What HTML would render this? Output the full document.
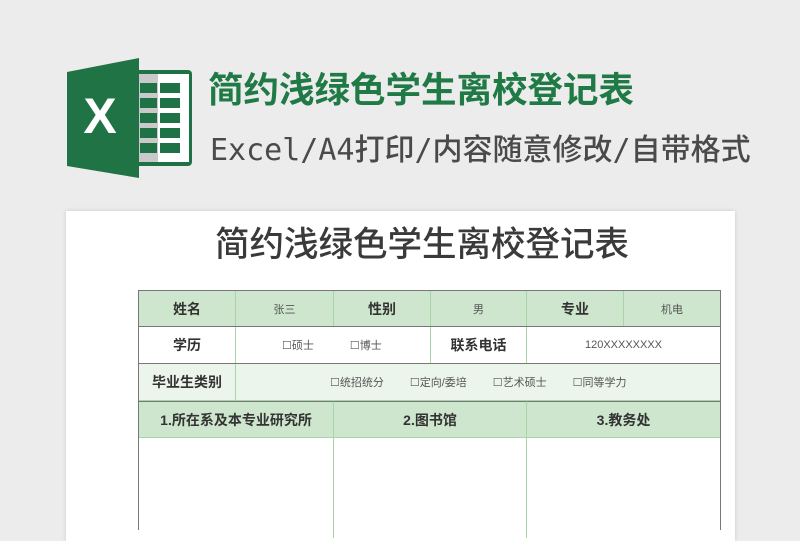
<!DOCTYPE html>
<html><head><meta charset="utf-8"><style>
*{margin:0;padding:0;box-sizing:border-box}
body{width:800px;height:526px;background:#ececec;position:relative;overflow:hidden;font-family:"Liberation Sans","Noto Sans CJK SC",sans-serif}
.h1{position:absolute;left:208px;top:68px;font-size:35.5px;font-weight:bold;color:#1f7a46;letter-spacing:0;white-space:nowrap;line-height:44px}
.h2{position:absolute;left:210px;top:131px;font-size:30px;color:#4a4a4a;white-space:nowrap;line-height:40px;font-family:"DejaVu Sans Mono","Noto Sans CJK SC",monospace;font-weight:500;letter-spacing:0}
.paper{position:absolute;left:66px;top:211px;width:669px;height:330px;background:#fff;box-shadow:0 0 4px rgba(0,0,0,.15)}
.t{position:absolute;left:149px;top:14px;font-size:34.5px;color:#3a3a3a;line-height:40px;font-weight:500;white-space:nowrap}
.c{position:absolute;display:flex;align-items:center;justify-content:center;font-size:11px;color:#555;border-right:1px solid #a9d3a9;border-bottom:1px solid #a9d3a9}
.b{font-weight:bold;font-size:14px;color:#333}
.g{background:#cee6ce}
.l{background:#ebf5eb}
</style></head><body>
<svg style="position:absolute;left:0;top:0" width="200" height="200">
<rect x="135" y="70" width="57" height="96" rx="4" fill="#1e7245"/>
<rect x="139" y="74" width="50" height="88" fill="#fff"/>
<rect x="139" y="74" width="19" height="88" fill="#c9c9c9"/>
<g fill="#1e7245">
<rect x="140" y="83" width="17" height="10"/><rect x="160" y="83" width="20" height="10"/>
<rect x="140" y="98" width="17" height="10"/><rect x="160" y="98" width="20" height="10"/>
<rect x="140" y="113" width="17" height="10"/><rect x="160" y="113" width="20" height="10"/>
<rect x="140" y="128" width="17" height="10"/><rect x="160" y="128" width="20" height="10"/>
<rect x="140" y="143" width="17" height="10"/><rect x="160" y="143" width="20" height="10"/>
</g>
<polygon points="67,72 139,58 139,178 67,166" fill="#1f7345"/>
<text x="100" y="133" text-anchor="middle" font-family="Liberation Sans" font-weight="bold" font-size="50" fill="#fff">X</text>
</svg>
<div class="h1">简约浅绿色学生离校登记表</div>
<div class="h2">Excel/A4打印/内容随意修改/自带格式</div>
<div class="paper"><div class="t">简约浅绿色学生离校登记表</div></div>
<div style="position:absolute;left:138px;top:290px;width:583px;height:240px;border:1px solid #777;border-bottom:none">
<div class="c g b" style="left:0;top:0;width:97px;height:36px">姓名</div>
<div class="c g" style="left:97px;top:0;width:98px;height:36px">张三</div>
<div class="c g b" style="left:195px;top:0;width:97px;height:36px">性别</div>
<div class="c g" style="left:292px;top:0;width:96px;height:36px">男</div>
<div class="c g b" style="left:388px;top:0;width:97px;height:36px">专业</div>
<div class="c g" style="left:485px;top:0;width:96px;height:36px;border-right:none">机电</div>
<div style="position:absolute;left:0;top:35px;width:581px;height:1px;background:#777"></div>
<div class="c b" style="left:0;top:36px;width:97px;height:37px">学历</div>
<div class="c" style="left:97px;top:36px;width:195px;height:37px;justify-content:flex-start;padding-left:46px">☐硕士<span style="margin-left:36px">☐博士</span></div>
<div class="c b" style="left:292px;top:36px;width:96px;height:37px">联系电话</div>
<div class="c" style="left:388px;top:36px;width:193px;height:37px;border-right:none">120XXXXXXXX</div>
<div style="position:absolute;left:0;top:72px;width:581px;height:1px;background:#777"></div>
<div class="c l b" style="left:0;top:73px;width:97px;height:37px">毕业生类别</div>
<div class="c l" style="left:97px;top:73px;width:484px;height:37px;border-right:none;justify-content:flex-start;padding-left:94px">☐统招统分<span style="margin-left:26px">☐定向/委培</span><span style="margin-left:26px">☐艺术硕士</span><span style="margin-left:26px">☐同等学力</span></div>
<div class="c g b" style="left:0;top:110px;width:195px;height:37px;border-top:1px solid #777">1.所在系及本专业研究所</div>
<div class="c g b" style="left:195px;top:110px;width:193px;height:37px;border-top:1px solid #777">2.图书馆</div>
<div class="c g b" style="left:388px;top:110px;width:193px;height:37px;border-right:none;border-top:1px solid #777">3.教务处</div>
<div class="c" style="left:0;top:147px;width:195px;height:100px;border-bottom:none"></div>
<div class="c" style="left:195px;top:147px;width:193px;height:100px;border-bottom:none"></div>
</div>
</body></html>
